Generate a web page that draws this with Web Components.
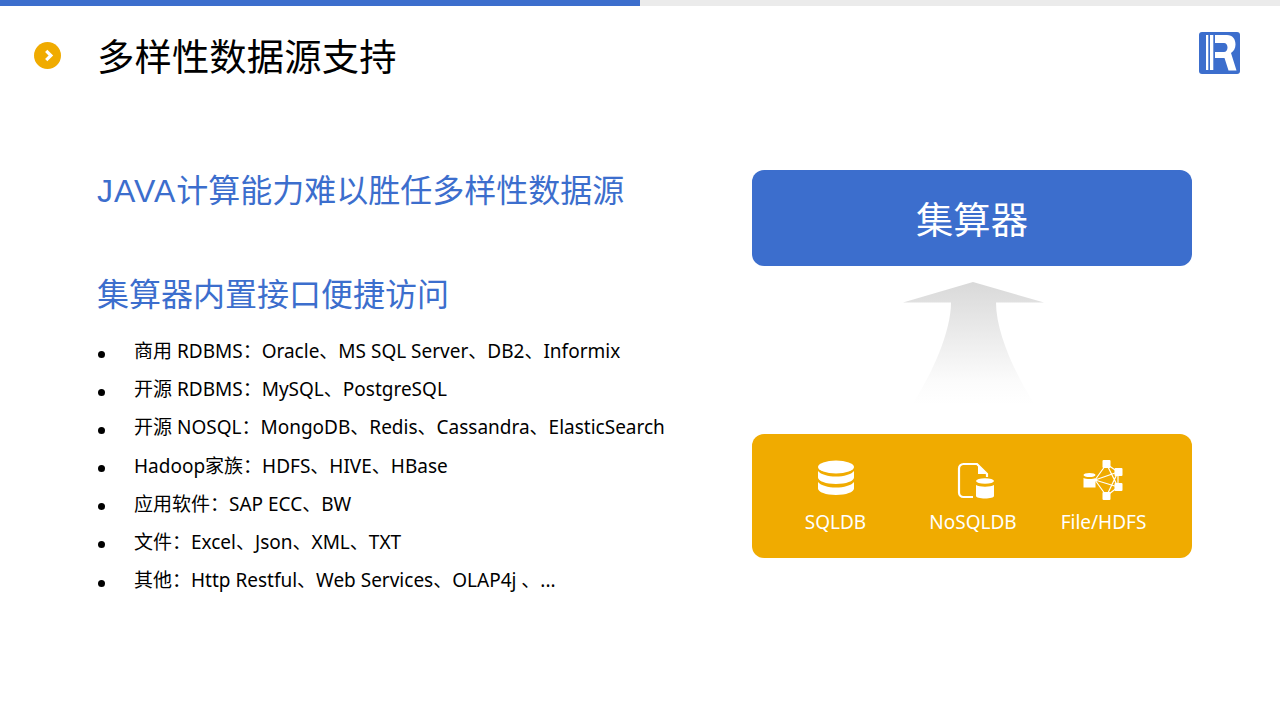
<!DOCTYPE html>
<html lang="zh-CN">
<head>
<meta charset="utf-8">
<title>多样性数据源支持</title>
<style>
  html, body { margin: 0; padding: 0; background: #fff; }
  body { width: 1280px; height: 720px; overflow: hidden; font-family: "Noto Sans", "Noto Sans CJK SC", sans-serif; }
</style>
</head>
<body>
<slide-page>
  <slide-header slot="header" heading="多样性数据源支持"></slide-header>
  <div slot="left">
    <lead-line><span style="font-family:'Liberation Sans',sans-serif;letter-spacing:1px">JAVA</span>计算能力难以胜任多样性数据源</lead-line>
    <lead-line second>集算器内置接口便捷访问</lead-line>
    <source-list>
      <li-item>商用 RDBMS：Oracle、MS SQL Server、DB2、Informix</li-item>
      <li-item>开源 RDBMS：MySQL、PostgreSQL</li-item>
      <li-item>开源 NOSQL：MongoDB、Redis、Cassandra、ElasticSearch</li-item>
      <li-item>Hadoop家族：HDFS、HIVE、HBase</li-item>
      <li-item>应用软件：SAP ECC、BW</li-item>
      <li-item>文件：Excel、Json、XML、TXT</li-item>
      <li-item>其他：Http Restful、Web Services、OLAP4j 、...</li-item>
    </source-list>
  </div>
  <flow-diagram slot="right"></flow-diagram>
</slide-page>

<script>
class SlidePage extends HTMLElement {
  constructor() {
    super();
    this.attachShadow({ mode: "open" }).innerHTML = `
    <style>
      :host { display: block; width: 1280px; height: 720px; }
      .progress { display: flex; height: 6px; background: #ebebeb; }
      .progress i { display: block; width: 640px; background: #3c6ecd; }
      .body { display: flex; padding: 0 88px 0 97px; }
      .left { flex: 1; padding-top: 0; }
      .right { width: 440px; padding-top: 93px; }
    </style>
    <div class="progress"><i></i></div>
    <slot name="header"></slot>
    <div class="body">
      <div class="left"><slot name="left"></slot></div>
      <div class="right"><slot name="right"></slot></div>
    </div>`;
  }
}

class SlideHeader extends HTMLElement {
  constructor() {
    super();
    this.attachShadow({ mode: "open" });
  }
  connectedCallback() {
    this.shadowRoot.innerHTML = `
    <style>
      :host { display: flex; align-items: center; height: 71px; box-sizing: border-box; padding: 0 40px 0 34px; }
      .dot { width: 27px; height: 27px; flex: none; margin-right: 36px; margin-top: 27px; }
      h1 { flex: 1; margin: 30px 0 0; font-weight: 400; font-size: 37.33px; line-height: 44px; letter-spacing: .12px; color: #000; white-space: nowrap; }
      .logo { width: 41px; height: 42px; flex: none; margin-top: 22px; }
    </style>
    <svg class="dot" viewBox="0 0 27 27">
      <circle cx="13.5" cy="13.5" r="13.5" fill="#f0ab00"/>
      <path d="M12.200 8.800l4.700 4.700-4.700 4.700" fill="none" stroke="#fff" stroke-width="3.200"/>
    </svg>
    <h1>${this.getAttribute("heading")}</h1>
    <svg class="logo" viewBox="0 0 41 42">
      <rect width="41" height="42" rx="3" fill="#3c6ecd"/>
      <rect x="7" y="3" width="2.300" height="35" fill="#fff"/>
      <rect x="11" y="3" width="3.300" height="35" fill="#fff"/>
      <path d="M16 3H28C33.500 3 36.500 7 36.500 12.500C36.500 16.500 34.500 19.500 32 21L37.500 38.500H29.500L25.500 26H16V20H25C27 20 28.500 18 28.500 15.500C28.500 13 27 11 25 11H16Z" fill="#fff"/>
    </svg>`;
  }
}

class LeadLine extends HTMLElement {
  constructor() {
    super();
    this.attachShadow({ mode: "open" }).innerHTML = `
    <style>
      :host { display: block; font-size: 32px; line-height: 42px; color: #3c6ecd; white-space: nowrap; margin-top: 92px; }
      :host([second]) { margin-top: 61px; }
    </style>
    <slot></slot>`;
  }
}

class SourceList extends HTMLElement {
  constructor() {
    super();
    this.attachShadow({ mode: "open" }).innerHTML = `
    <style>
      :host { display: flex; flex-direction: column; gap: 10.2px; margin-top: 21px; }
    </style>
    <slot></slot>`;
  }
}

class LiItem extends HTMLElement {
  constructor() {
    super();
    this.attachShadow({ mode: "open" }).innerHTML = `
    <style>
      :host { display: flex; align-items: center; height: 28px; font-size: 19px; color: #000; white-space: nowrap; }
      i { width: 7px; height: 7px; border-radius: 50%; background: #000; flex: none; margin: 8px 29px 0 1px; }
    </style>
    <i></i><span><slot></slot></span>`;
  }
}

class FlowDiagram extends HTMLElement {
  constructor() {
    super();
    this.attachShadow({ mode: "open" }).innerHTML = `
    <style>
      :host { display: block; width: 440px; }
      .top { height: 96px; border-radius: 12px; background: #3c6ecd; color: #fff; font-size: 37.33px; display: flex; align-items: center; justify-content: center; }
      .arrow { display: block; width: 144px; height: 124px; margin: 16px 0 28px 150px; }
      .bottom { height: 124px; border-radius: 12px; background: #f0ab00; color: #fff; display: grid; grid-template-columns: 167px 108px 153px; }
      .cell { display: flex; flex-direction: column; align-items: center; font-size: 19px; line-height: 26px; padding-top: 25px; white-space: nowrap; }
      .cell svg { display: block; flex: none; width: 44px; height: 42px; margin-bottom: 8px; }
    </style>
    <div class="top">集算器</div>
    <svg class="arrow" viewBox="0 0 144 124">
      <defs>
        <linearGradient id="fade" x1="0" y1="0" x2="0" y2="1">
          <stop offset="0" stop-color="#d9d9d9"/>
          <stop offset="0.8" stop-color="#fbfbfb"/>
          <stop offset="1" stop-color="#ffffff"/>
        </linearGradient>
      </defs>
      <path d="M71 0L142 20.500H94C94 50 112 90 133 123H10C30 92 49 50 49 20.500H1z" fill="url(#fade)"/>
    </svg>
    <div class="bottom">
      <div class="cell">
        <svg viewBox="0 0 44 42">
          <ellipse cx="22" cy="8" rx="18" ry="6.500" fill="#fff"/>
          <path d="M4 12v6.500c0 3.600 8 6.500 18 6.500s18-2.900 18-6.500V12c-3 3.600-10 5.500-18 5.500S7 15.600 4 12z" fill="#fff"/>
          <path d="M4 23v6.500c0 3.600 8 6.500 18 6.500s18-2.900 18-6.500V23c-3 3.600-10 5.500-18 5.500S7 26.600 4 23z" fill="#fff"/>
        </svg>
        <span>SQLDB</span>
      </div>
      <div class="cell">
        <svg viewBox="0 0 44 42">
          <path d="M22 38H12.500C10 38 8 36 8 33.500V9.500C8 7 10 5 12.500 5H26L36 15V18" fill="none" stroke="#fff" stroke-width="2.200"/>
          <path d="M27 6.500V15H35.500z" fill="#fff"/>
          <ellipse cx="34" cy="22" rx="9" ry="2.800" fill="#fff"/>
          <path d="M25 26c2 1.200 5 1.700 9 1.700s7-.5 9-1.700V37c0 1.400-4 2.500-9 2.500s-9-1.100-9-2.500z" fill="#fff"/>
        </svg>
        <span>NoSQLDB</span>
      </div>
      <div class="cell">
        <svg viewBox="0 0 44 42">
          <g stroke="#fff" stroke-width="1.200" fill="none">
            <path d="M13 21L24.500 5M13 21L36 13M13 21L36 28M13 21L24.500 37M24.500 5L36 13M36 13V28M36 28L24.500 37M24.500 5L36 28M24.500 37L36 13"/>
          </g>
          <g fill="#fff">
            <rect x="20.500" y="1" width="8" height="8" rx="1"/>
            <rect x="32.500" y="9" width="8" height="8" rx="1"/>
            <rect x="32.500" y="24" width="8" height="8" rx="1"/>
            <rect x="20.500" y="33" width="8" height="8" rx="1"/>
            <ellipse cx="7.500" cy="16" rx="6" ry="2"/>
            <path d="M1.500 19c1.500.7 3.500 1 6 1s4.500-.3 6-1v9.500h-12z"/>
          </g>
        </svg>
        <span>File/HDFS</span>
      </div>
    </div>`;
  }
}

customElements.define("slide-page", SlidePage);
customElements.define("slide-header", SlideHeader);
customElements.define("lead-line", LeadLine);
customElements.define("source-list", SourceList);
customElements.define("li-item", LiItem);
customElements.define("flow-diagram", FlowDiagram);
</script>
</body>
</html>
